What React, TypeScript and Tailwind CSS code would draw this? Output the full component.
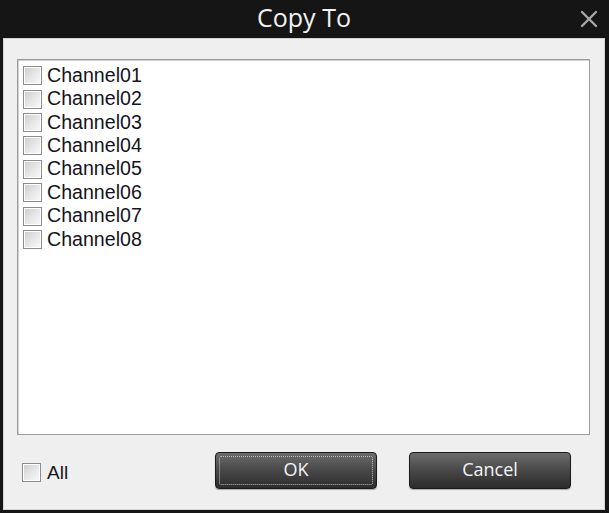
import React from 'react'

const channels = ['Channel01', 'Channel02', 'Channel03', 'Channel04', 'Channel05', 'Channel06', 'Channel07', 'Channel08']

function Box() {
  return (
    <span className="flex h-[19px] w-[19px] flex-shrink-0 border border-[#8c8c8c] bg-white p-[1px]">
      <span className="flex-1 bg-gradient-to-br from-[#cfcfcf] via-[#e6e6e6] to-[#f8f8f8]" />
    </span>
  )
}

function DarkButton({ label, focused }: { label: string; focused?: boolean }) {
  return (
    <button
      type="button"
      className="relative flex h-[37px] w-[162px] items-center justify-center rounded-[4px] border border-[#1c1c1c] bg-gradient-to-b from-[#6c6c6c] via-[#484848] to-[#2c2c2c] text-[18px] text-[#f4f4f4] shadow-[0_1px_1px_rgba(0,0,0,0.3)]"
      style={{ fontFamily: '"Open Sans", "Noto Sans", sans-serif' }}
    >
      {focused && <span className="absolute inset-[3px] rounded-[2px] border border-dotted border-[#bdbdbd]" />}
      <span className="relative -mt-[2px]">{label}</span>
    </button>
  )
}

export default function App() {
  return (
    <div className="flex h-[513px] w-[609px] flex-col bg-[#151515] pb-[3px] pl-[3px] pr-[4px]">
      {/* Title bar */}
      <div className="relative flex h-[38px] flex-shrink-0 items-center justify-center">
        <span
          className="-mt-[2px] text-[25px] text-[#f2f2f2]"
          style={{ fontFamily: '"Open Sans", "Noto Sans", sans-serif' }}
        >
          Copy To
        </span>
        <svg className="absolute right-[7px] top-[10px]" width="18" height="18" viewBox="0 0 18 18">
          <path d="M2 2 L16 16 M16 2 L2 16" stroke="#a8a8a8" strokeWidth="2.4" strokeLinecap="round" />
        </svg>
      </div>

      {/* Body */}
      <div
        className="flex flex-1 flex-col border border-[#d4d4d4] bg-[#efefef] pl-[13px] pr-[14px] pt-[20px]"
        style={{ fontFamily: '"Liberation Sans", Arial, sans-serif' }}
      >
        <div className="h-[376px] border border-[#9c9c9c] bg-white pl-[5px] pt-[4px] shadow-[inset_1px_1px_0_#d0d0d0]">
          {channels.map(c => (
            <div key={c} className="flex h-[23.4px] items-center gap-[5px]">
              <Box />
              <span className="text-[19.6px] leading-none text-[#141420]">{c}</span>
            </div>
          ))}
        </div>

        <div className="mt-[17px] flex h-[37px] items-center pl-[5px]">
          <div className="mt-[3px] flex w-[193px] items-center gap-[6px]">
            <Box />
            <span className="text-[19px] leading-none text-[#141420]">All</span>
          </div>
          <DarkButton label="OK" focused />
          <div className="w-[32px]" />
          <DarkButton label="Cancel" />
        </div>
      </div>
    </div>
  )
}
